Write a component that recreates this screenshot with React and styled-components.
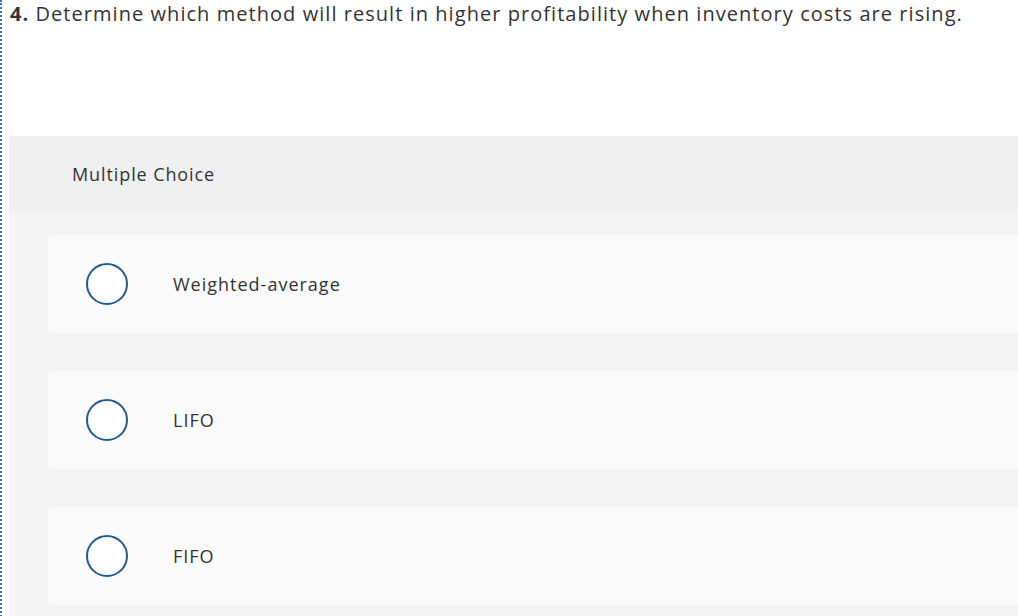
import React from "react";
import styled, { createGlobalStyle } from "styled-components";

const Global = createGlobalStyle`
  html, body { margin: 0; padding: 0; background: #ffffff; }
  body { font-family: "Open Sans", Lato, sans-serif; color: #333333; overflow: hidden; }
`;

const Frame = styled.div`
  border-left: 2px dotted #3a74bf;
  min-height: 616px;
  box-sizing: border-box;
  padding-left: 7px;
  overflow: hidden;
`;

const Question = styled.p`
  margin: 0;
  padding: 0 0 0 1px;
  height: 136px;
  font-size: 20px;
  line-height: 28px;
  letter-spacing: 1.05px;
  color: #333333;
  white-space: nowrap;
  b { font-weight: 700; }
`;

const Panel = styled.section`
  background: #f4f4f4;
  border-radius: 4px 0 0 0;
  width: 1100px;
  min-height: 480px;
`;

const Header = styled.div`
  height: 75px;
  background: #f0f0f0;
  border-radius: 4px 0 0 0;
  display: flex;
  align-items: center;
  padding-left: 63px;
  font-size: 18px;
  letter-spacing: 0.9px;
  color: #333333;
`;

const Options = styled.div`
  display: flex;
  flex-direction: column;
  gap: 38px;
  padding: 24px 0 20px 39px;
`;

const Card = styled.label`
  height: 98px;
  background: #fafafa;
  border-radius: 4px 0 0 4px;
  display: flex;
  align-items: center;
  padding-left: 38px;
  gap: 45px;
  font-size: 18px;
  letter-spacing: 1px;
  color: #333333;
`;

const Radio = styled.span`
  width: 42px;
  height: 42px;
  box-sizing: border-box;
  border: 2.5px solid #23598f;
  border-radius: 50%;
  background: #ffffff;
  flex: none;
`;

const choices = ["Weighted-average", "LIFO", "FIFO"];

export default function App() {
  return (
    <>
      <Global />
      <Frame>
        <Question>
          <b>4.</b> Determine which method will result in higher profitability when inventory costs are rising.
        </Question>
        <Panel>
          <Header>Multiple Choice</Header>
          <Options>
            {choices.map((c) => (
              <Card key={c}>
                <Radio />
                {c}
              </Card>
            ))}
          </Options>
        </Panel>
      </Frame>
    </>
  );
}
